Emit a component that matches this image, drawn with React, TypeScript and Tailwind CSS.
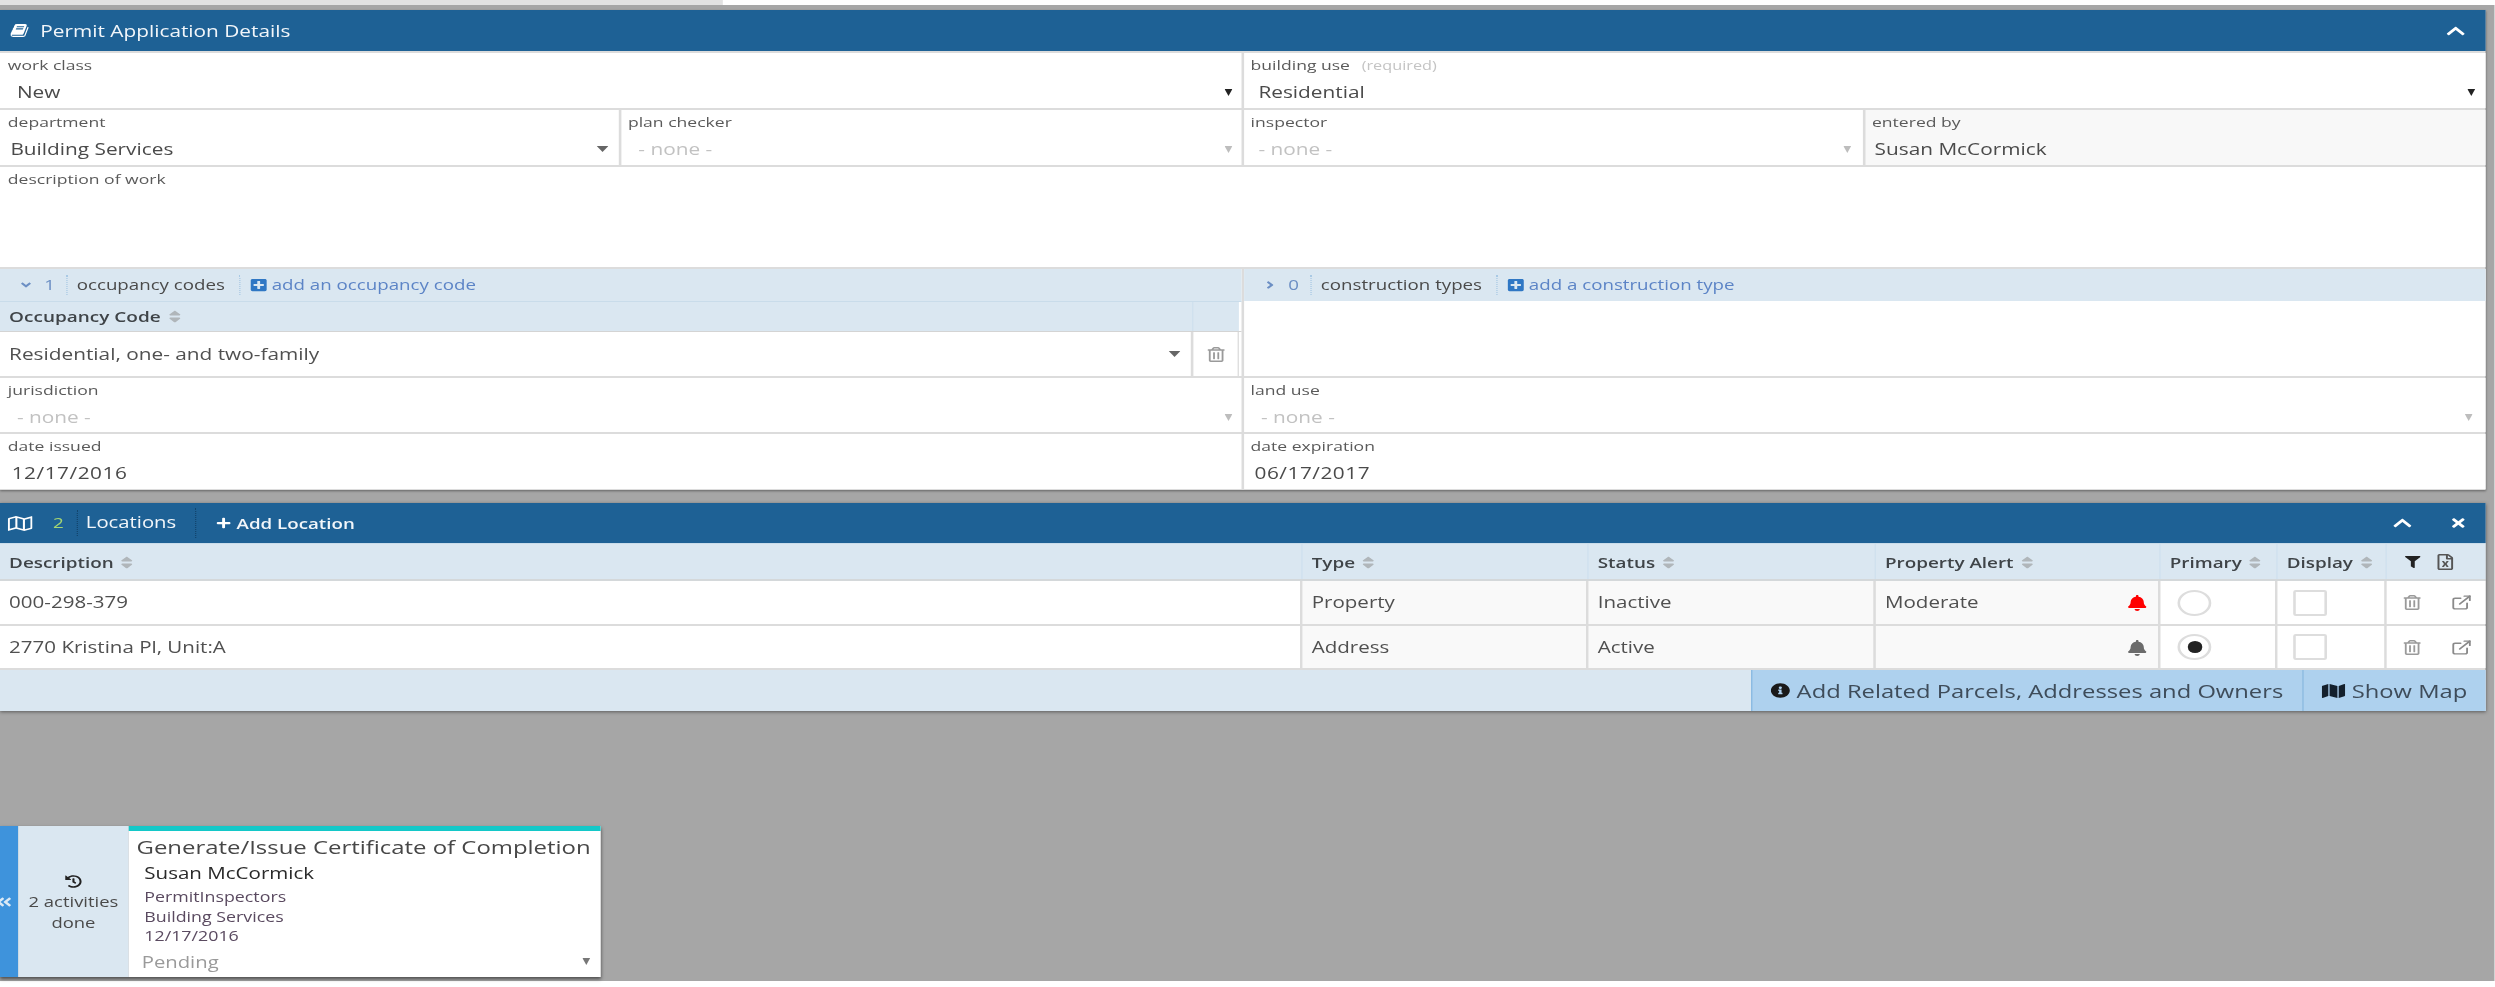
import React from "react";
import {
  FaChevronUp, FaTimes, FaRegMap, FaPlus, FaPlusSquare, FaInfoCircle, FaMap, FaBell,
  FaRegTrashAlt, FaFilter, FaRegFileExcel, FaHistory, FaAngleDoubleLeft, FaAngleDown, FaAngleRight, FaSort,
} from "react-icons/fa";
import { ExternalLink } from "lucide-react";

const Caret = ({ className = "", narrow }: { className?: string; narrow?: boolean }) =>
  narrow ? (
    <svg width="6" height="7" viewBox="0 0 6 7" className={className}>
      <polygon points="0,0 6,0 3,7" fill="currentColor" />
    </svg>
  ) : (
    <svg width="9" height="6" viewBox="0 0 9 6" className={className}>
      <polygon points="0,0 9,0 4.5,6" fill="currentColor" />
    </svg>
  );

const BookIcon = () => (
  <svg width="15" height="15" viewBox="0 0 1792 1792" fill="currentColor">
    <path d="M1639 478q40 57 18 129l-275 906q-19 64-76.5 107.5t-122.5 43.5h-923q-77 0-148.5-53.5t-99.5-131.5q-24-67-2-127 0-4 3-27t4-37q1-8-3-21.5t-3-19.5q2-11 8-21t16.5-23.5 16.5-23.5q23-38 45-91.5t30-91.5q3-10 .5-30t-.5-28q3-11 17-28t17-23q21-36 42-92t25-90q1-9-2.5-32t.5-28q4-13 22-30.5t22-22.5q19-26 42.5-84.5t27.5-96.5q1-8-3-25.5t-2-26.5q2-8 9-18t18-23 17-21q8-12 16.5-30.5t15-35 16-36 19.5-32 26.5-23.5 36-11.5 47.5 5.5l-1 3q38-9 51-9h761q74 0 114 56t18 130l-274 906q-36 119-71.5 153.5t-128.5 34.5h-869q-27 0-38 15-11 16-1 43 24 70 144 70h923q29 0 56-15.5t35-41.5l300-987q7-22 5-57 38 15 59 43zm-1064 2q-4 13 2 22.5t20 9.5h608q13 0 25.5-9.5t16.5-22.5l21-64q4-13-2-22.5t-20-9.5h-608q-13 0-25.5 9.5t-16.5 22.5zm-83 256q-4 13 2 22.5t20 9.5h608q13 0 25.5-9.5t16.5-22.5l21-64q4-13-2-22.5t-20-9.5h-608q-13 0-25.5 9.5t-16.5 22.5z" />
  </svg>
);

type FieldProps = {
  label: string;
  hint?: string;
  value: string;
  muted?: boolean;
  caret?: string;
  narrow?: boolean;
  valuePad?: string;
  labelPad?: string;
  width?: string;
  bg?: string;
  date?: boolean;
};

const Field = ({ label, hint, value, muted, caret, narrow = true, valuePad = "pl-[13px]", labelPad = "pl-[6px]", width = "flex-1", bg = "bg-white", date }: FieldProps) => (
  <div className={`${width} ${bg} h-full min-w-0 flex flex-col`}>
    <div className={`${labelPad} pt-[4px] h-[20px] text-[13.5px] leading-[16px] text-[#5a5a5a]`}>
      {label}
      {hint && <span className="ml-[9px] text-[#c4c4c4] text-[12.5px]">{hint}</span>}
    </div>
    <div className={`mt-[8px] h-[22px] flex items-center justify-between pr-[6px] ${valuePad}`}>
      <span className={`text-[16px] leading-[22px] ${muted ? "text-[#c2c2c2]" : "text-[#4a4a4a]"} ${date ? "tracking-[0.4px]" : ""}`}>{value}</span>
      {caret && <Caret narrow={narrow} className={caret} />}
    </div>
  </div>
);

const Sort = () => <FaSort className="text-[#b0b6ba] ml-[3px]" size={15} />;

const SubBar = ({ open, count, title, add, titleW }: { open: boolean; count: string; title: string; add: string; titleW: string }) => (
  <div className="h-[32px] flex-none bg-[#dae7f1] flex items-center text-[14.4px] min-w-0">
    <div className="w-[52px] h-[20px] flex items-center border-r border-dotted border-[#a9c9e4]">
      <span className="w-[34px] pl-[14px] flex">
        {open ? <FaAngleDown size={12} className="text-[#6c8fc4]" /> : <FaAngleRight size={12} className="text-[#6c8fc4]" />}
      </span>
      <span className="text-[#6c8fc4]">{count}</span>
    </div>
    <div className={`${titleW} h-[20px] pl-[7px] flex items-center border-r border-dotted border-[#a9c9e4] text-[#4a4a4a]`}>{title}</div>
    <FaPlusSquare size={14} className="ml-[7px] text-[#2f77c4]" />
    <span className="ml-[3px] text-[#5c84c6]">{add}</span>
  </div>
);

const TH = ({ children, w }: { children: React.ReactNode; w: string }) => (
  <div className={`${w} h-full flex items-center pl-[7px] pt-[2px] border-r border-[#cfe0ee] text-[14.5px] font-semibold text-[#3f4448]`}>
    {children}
    <Sort />
  </div>
);

const TD = ({ children, w, alt }: { children?: React.ReactNode; w: string; alt?: boolean }) => (
  <div className={`${w} h-full flex items-center pl-[7px] pt-[1px] border-r-2 border-[#dcdcdc] text-[15.8px] text-[#505050] ${alt ? "bg-[#f9f9f9]" : "bg-white"}`}>
    {children}
  </div>
);

const Row = ({ d, t, s, alert, bell, checked, h }: { d: string; t: string; s: string; alert: string; bell: string; checked: boolean; h: string }) => (
  <div className={`${h} flex`}>
    <TD w="w-[1002px]">{d}</TD>
    <TD w="w-[220px]" alt>{t}</TD>
    <TD w="w-[221px]" alt>{s}</TD>
    <div className="w-[219px] h-full flex items-center justify-between pl-[7px] pr-[8px] pt-[1px] border-r-2 border-[#dcdcdc] bg-[#f9f9f9] text-[15.8px] text-[#505050]">
      <span>{alert}</span>
      <FaBell size={16} className={bell} />
    </div>
    <div className="w-[90px] h-full bg-white border-r-2 border-[#dcdcdc] flex items-center pl-[13px]">
      <div className="w-[26px] h-[26px] rounded-full border-2 border-[#dddddd] bg-white flex items-center justify-center">
        {checked && <div className="w-[11px] h-[12px] rounded-full bg-[#222222]" />}
      </div>
    </div>
    <div className="w-[84px] h-full bg-white border-r-2 border-[#dcdcdc] flex items-center pl-[12px]">
      <div className="w-[26px] h-[26px] rounded-[2px] border-2 border-[#dddddd] bg-white" />
    </div>
    <div className="w-[76px] h-full bg-white flex items-center justify-between pl-[12px] pr-[10px]">
      <FaRegTrashAlt size={15} className="text-[#9a9a9a]" />
      <ExternalLink size={17} className="text-[#8a8a8a]" />
    </div>
  </div>
);

export default function App() {
  return (
    <div className="w-[1919.23px] h-[987px] origin-top-left scale-x-[1.3] blur-[0.4px] bg-white font-['Open_Sans',sans-serif] overflow-hidden">
      <div className="h-[5px] flex bg-white">
        <div className="w-[556px] bg-[#e2e2e2]" />
      </div>
      <div className="h-[976px] bg-[#a6a6a6] pt-[5px]">
        {/* Permit application panel */}
        <div className="w-[1912px] bg-[#dcdcdc] shadow-[0_1px_2px_rgba(0,0,0,0.4)]">
          <div className="h-[41px] bg-[#1e6195] flex items-center justify-between pl-[8px] pr-[15px] text-white">
            <div className="flex items-center">
              <BookIcon />
              <span className="ml-[8px] text-[16px] text-[#f2f6fa]">Permit Application Details</span>
            </div>
            <FaChevronUp size={16} />
          </div>
          <div className="h-[2px]" />
          <div className="h-[55px] flex gap-[2px]">
            <Field width="w-[955px]" label="work class" value="New" caret="text-[#222222] mr-[1px]" />
            <Field labelPad="pl-[5px]" label="building use" hint="(required)" value="Residential" valuePad="pl-[11px]" caret="text-[#222222] mr-[2px]" />
          </div>
          <div className="h-[2px]" />
          <div className="h-[55px] flex gap-[2px]">
            <Field width="w-[476px]" label="department" value="Building Services" valuePad="pl-[8px]" narrow={false} caret="text-[#666666] mr-[2px]" />
            <Field width="w-[477px]" labelPad="pl-[5px]" label="plan checker" value="- none -" muted valuePad="pl-[13px]" caret="text-[#bdbdbd] mr-[1px]" />
            <Field width="w-[476px]" labelPad="pl-[5px]" label="inspector" value="- none -" muted valuePad="pl-[11px]" caret="text-[#bdbdbd] mr-[3px]" />
            <Field bg="bg-[#f8f8f8]" labelPad="pl-[5px]" label="entered by" value="Susan McCormick" valuePad="pl-[7px]" />
          </div>
          <div className="h-[2px]" />
          <div className="h-[100px] bg-white pl-[6px] pt-[4px] text-[13.5px] leading-[16px] text-[#5a5a5a]">description of work</div>
          <div className="h-[2px]" />
          <div className="h-[107px] flex gap-[2px]">
            <div className="w-[955px] bg-white flex flex-col">
              <SubBar open count="1" title="occupancy codes" add="add an occupancy code" titleW="w-[133px]" />
              <div className="h-[1px] bg-[#c9dcea]" />
              <div className="w-[953px] h-[29px] flex bg-[#dae7f1]">
                <div className="w-[918px] flex items-center pl-[7px] text-[14.6px] font-semibold text-[#3f4448] border-r border-[#cfe0ee]">
                  Occupancy Code
                  <Sort />
                </div>
              </div>
              <div className="h-[1px] bg-[#d4d4d4]" />
              <div className="w-[953px] h-[44px] flex">
                <div className="w-[918px] border-r-2 border-[#dcdcdc] flex items-center justify-between pl-[7px] pr-[8px] text-[16px] text-[#505050]">
                  <span>Residential, one- and two-family</span>
                  <Caret className="text-[#666666]" />
                </div>
                <div className="w-[35px] border-r border-[#dcdcdc] flex items-center justify-center">
                  <FaRegTrashAlt size={15} className="text-[#9a9a9a]" />
                </div>
              </div>
            </div>
            <div className="flex-1 bg-white flex flex-col">
              <SubBar open={false} count="0" title="construction types" add="add a construction type" titleW="w-[143px]" />
            </div>
          </div>
          <div className="h-[2px]" />
          <div className="h-[54px] flex gap-[2px]">
            <Field width="w-[955px]" label="jurisdiction" value="- none -" muted valuePad="pl-[13px]" caret="text-[#bdbdbd] mr-[1px]" />
            <Field labelPad="pl-[5px]" label="land use" value="- none -" muted valuePad="pl-[13px]" caret="text-[#bdbdbd] mr-[4px]" />
          </div>
          <div className="h-[2px]" />
          <div className="h-[55px] flex gap-[2px]">
            <Field width="w-[955px]" label="date issued" value="12/17/2016" valuePad="pl-[9px]" date />
            <Field labelPad="pl-[5px]" label="date expiration" value="06/17/2017" valuePad="pl-[8px]" date />
          </div>
          <div className="h-[1px]" />
        </div>

        {/* Locations panel */}
        <div className="mt-[13px] w-[1912px] bg-[#dcdcdc] shadow-[0_1px_3px_rgba(0,0,0,0.45)]">
          <div className="h-[40px] bg-[#1e6195] flex items-center text-white">
            <FaRegMap size={19} className="ml-[6px]" />
            <div className="w-[35px] h-[26px] flex items-center justify-end pr-[10px] border-r border-dotted border-[#12456e] text-[14.5px] text-[#a6d672]">2</div>
            <div className="w-[91px] h-[30px] pl-[6px] flex items-center border-r border-dotted border-[#12456e] text-[15.6px] text-[#f2f6fa]">Locations</div>
            <FaPlus size={12} className="ml-[15px]" />
            <span className="ml-[4px] pt-[1px] text-[14.4px] font-semibold text-[#f2f6fa]">Add Location</span>
            <FaChevronUp size={16} className="ml-auto" />
            <FaTimes size={14} className="ml-[28px] mr-[14px]" />
          </div>
          <div className="h-[1px] bg-[#c9dcea]" />
          <div className="h-[35px] flex bg-[#dae7f1]">
            <TH w="w-[1002px]">Description</TH>
            <TH w="w-[220px]">Type</TH>
            <TH w="w-[221px]">Status</TH>
            <TH w="w-[219px]">Property Alert</TH>
            <TH w="w-[90px]">Primary</TH>
            <TH w="w-[84px]">Display</TH>
            <div className="w-[76px] flex items-center pl-[14px] gap-[11px]">
              <FaFilter size={12} className="text-[#222222]" />
              <FaRegFileExcel size={16} className="text-[#555555]" />
            </div>
          </div>
          <div className="h-[2px] bg-[#d4d8da]" />
          <Row h="h-[43px]" d="000-298-379" t="Property" s="Inactive" alert="Moderate" bell="text-[#ff0000]" checked={false} />
          <div className="h-[2px]" />
          <Row h="h-[42px]" d="2770 Kristina Pl, Unit:A" t="Address" s="Active" alert="" bell="text-[#6b6b6b]" checked />
          <div className="h-[2px]" />
          <div className="h-[41px] flex justify-end bg-[#dae7f1]">
            <div className="w-[424px] flex items-center pl-[14px] bg-[#aed1ee] border-l border-[#88b8e0] text-[#3e4c5a] text-[18.3px]">
              <FaInfoCircle size={15} className="text-[#1a1a1a]" />
              <span className="ml-[5px]">Add Related Parcels, Addresses and Owners</span>
            </div>
            <div className="w-[141px] flex items-center pl-[14px] bg-[#aed1ee] border-l border-[#88b8e0] text-[#3e4c5a] text-[18.3px]">
              <FaMap size={18} className="text-[#14202c]" />
              <span className="ml-[5px]">Show Map</span>
            </div>
          </div>
        </div>

        {/* Activity card */}
        <div className="mt-[115px] w-[462px] h-[151px] flex shadow-[0_2px_3px_rgba(0,0,0,0.55)]">
          <div className="w-[14px] bg-[#3e93dc] flex items-center text-[#dbe9f5]">
            <FaAngleDoubleLeft size={14} className="-ml-[4px]" />
          </div>
          <div className="w-[85px] bg-[#dae7f1] flex flex-col items-center justify-center pt-[5px] text-[14.2px] leading-[21px] text-[#4a4a4a]">
            <FaHistory size={13} className="text-[#222222] mb-[3px]" />
            <span>2 activities</span>
            <span>done</span>
          </div>
          <div className="flex-1 bg-white flex flex-col border-t-[5px] border-[#14c8c8]">
            <div className="pl-[6px] pt-[4px] text-[18.4px] leading-[24px] text-[#474747]">Generate/Issue Certificate of Completion</div>
            <div className="pl-[12px] mt-[4px] text-[15.8px] leading-[20px] font-medium text-[#2a2a2a]">Susan McCormick</div>
            <div className="pl-[12px] mt-[4px] text-[13.7px] leading-[19.5px] text-[#5a4a60]">
              <div>PermitInspectors</div>
              <div>Building Services</div>
              <div>12/17/2016</div>
            </div>
            <div className="mt-[5px] pl-[10px] pr-[8px] flex items-center justify-between text-[15.6px] leading-[22px] text-[#9a9a9a]">
              <span>Pending</span>
              <Caret narrow className="text-[#777777]" />
            </div>
          </div>
        </div>
      </div>
    </div>
  );
}
